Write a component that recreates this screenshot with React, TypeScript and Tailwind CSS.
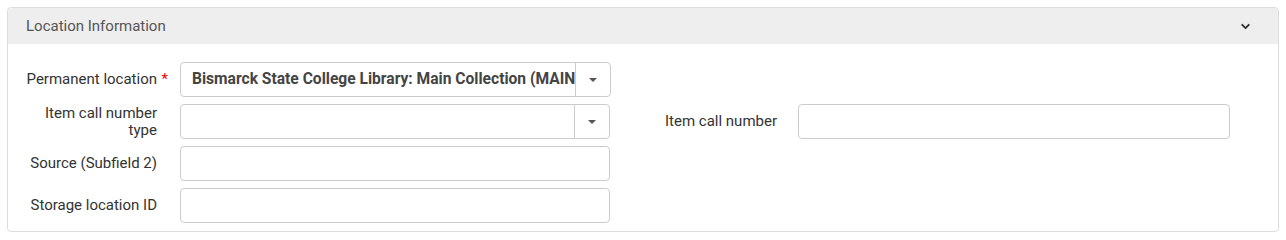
import { ChevronDown } from "lucide-react";

function Caret() {
  return (
    <svg width="8" height="4" viewBox="0 0 8 4" className="fill-[#555]">
      <path d="M0 0h8L4 4z" />
    </svg>
  );
}

function Label({ text, required }: { text: string; required?: boolean }) {
  return (
    <label className="relative w-[135px] shrink-0 text-right text-[15px] leading-[17px] text-[#333]">
      {text}
      {required && <span className="absolute -right-[11px] top-0 text-[#e00]">*</span>}
    </label>
  );
}

function TextInput({ width = "w-[431px]" }: { width?: string }) {
  return <div className={`h-[35px] ${width} rounded-[4px] border border-[#ccc] bg-white`} />;
}

function SelectInput({ value }: { value?: string }) {
  return (
    <div className="flex h-[35px] w-[431px] rounded-[4px] border border-[#ccc] bg-white">
      <div className="flex-1 overflow-hidden whitespace-nowrap pl-[11px] text-[15.6px] font-bold leading-[32px] text-[#444]">
        {value}
      </div>
      <div className="flex w-[35px] items-center justify-center border-l border-[#ccc]">
        <Caret />
      </div>
    </div>
  );
}

export default function App() {
  return (
    <div className="bg-white px-[7px] pt-[7px] font-['Roboto',sans-serif]">
      <div className="h-[225px] rounded-[4px] border border-[#ddd] bg-white">
        <div className="flex h-[36px] items-center justify-between rounded-t-[4px] bg-[#eee] pl-[18px] pr-[26px]">
          <span className="pt-[1px] text-[15px] text-[#555]">Location Information</span>
          <ChevronDown className="h-[13px] w-[13px] text-[#333]" strokeWidth={3.5} />
        </div>
        <div className="flex pl-[14px] pt-[18px]">
          <div className="flex w-[588px] flex-col gap-[7px]">
            <div className="flex items-center gap-[23px]">
              <Label text="Permanent location" required />
              <SelectInput value="Bismarck State College Library: Main Collection (MAIN)" />
            </div>
            <div className="flex items-center gap-[23px]">
              <Label text="Item call number type" />
              <SelectInput />
            </div>
            <div className="flex items-center gap-[23px]">
              <Label text="Source (Subfield 2)" />
              <TextInput />
            </div>
            <div className="flex items-center gap-[23px]">
              <Label text="Storage location ID" />
              <TextInput />
            </div>
          </div>
          <div className="ml-[32px] flex flex-col pt-[42px]">
            <div className="flex items-center gap-[21px]">
              <Label text="Item call number" />
              <TextInput width="w-[432px]" />
            </div>
          </div>
        </div>
      </div>
    </div>
  );
}
